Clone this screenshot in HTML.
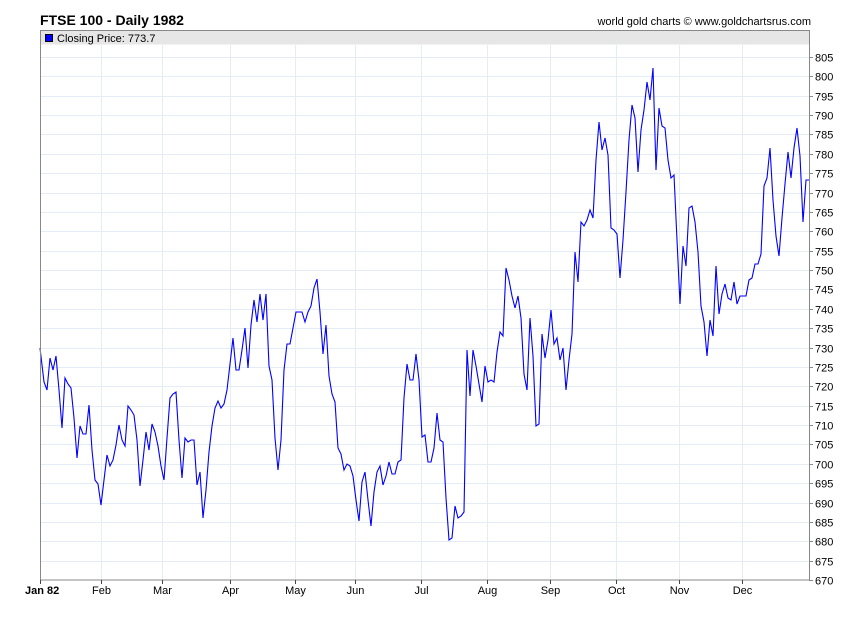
<!DOCTYPE html>
<html><head><meta charset="utf-8"><style>
body{margin:0;background:#fff;width:850px;height:616px;overflow:hidden;font-family:"Liberation Sans",sans-serif;}
</style></head><body>
<svg width="850" height="616" xmlns="http://www.w3.org/2000/svg" font-family="Liberation Sans, sans-serif">
<text x="40" y="25" font-size="14" font-weight="bold" fill="#000">FTSE 100 - Daily 1982</text>
<text x="811" y="25" font-size="11" text-anchor="end" fill="#000">world gold charts © www.goldchartsrus.com</text>
<rect x="40.5" y="45" width="769" height="535" fill="#fff"/>
<g id="grid" stroke="#e4edf6" stroke-width="1">
</g>
<rect x="40.5" y="30.5" width="769" height="14" fill="#e6e6e6"/>
<rect x="45.5" y="34.5" width="7" height="7" fill="#0000ff" stroke="#000" stroke-width="1"/>
<text x="57" y="42" font-size="11" fill="#000">Closing Price: 773.7</text>
<polyline id="line" fill="none" stroke="#0000ff" stroke-width="1.1" points="40,348 44,382 47,390 50,358 53,370 56,356 59,390 62,428 65,378 68,384 71,388 74,418 77,458 80,426 83,434 86,434 89,405 92,450 95,480 98,484 101,505 104,480 107,455 110,466 113,460 116,445 119,425 122,440 125,446 128,406 131,410 134,415 137,440 140,486 143,460 146,432 149,450 152,424 155,432 158,446 161,466 164,480 167,438 170,398 173,394 176,392 179,440 182,478 185,438 188,442 191,440 194,440 197,485 200,472 203,518 206,490 209,452 212,426 215,408 218,401 221,408 224,404 227,390 230,364 233,338 236,370 239,370 242,350 245,328 248,368 251,325 254,300 257,322 260,294 263,320 266,294 269,366 272,380 275,438 278,470 281,440 284,370 287,344 290,344 293,328 296,312 299,312 302,312 305,322 308,312 311,306 314,288 317,279 320,312 323,354 326,325 329,376 332,394 335,402 338,448 341,454 344,470 347,464 350,466 353,476 356,500 359,521 362,482 365,472 368,500 371,526 374,492 377,472 380,466 383,485 386,476 389,462 392,474 395,474 398,462 401,460 404,398 407,364 410,380 413,380 416,354 419,380 422,437 425,435 428,462 431,462 434,448 437,413 440,440 443,442 446,498 449,540 452,538 455,506 458,518 461,516 464,512 467,350 470,396 473,350 476,366 479,384 482,402 485,366 488,382 491,380 494,382 497,352 500,332 503,336 506,268 509,280 512,296 515,308 518,296 521,318 524,374 527,390 530,318 533,356 536,426 539,424 542,334 545,358 548,340 551,310 554,344 557,338 560,360 563,348 566,390 569,360 572,334 575,252 578,282 581,222 584,226 587,220 590,210 593,218 596,160 599,122 602,150 605,138 608,155 611,228 614,230 617,234 620,278 623,240 626,192 629,140 632,105 635,118 638,172 641,130 644,110 647,82 650,100 653,68 656,170 659,108 662,126 665,128 668,160 671,178 674,175 677,240 680,304 683,246 686,266 689,208 692,206 695,222 698,252 701,306 704,322 707,356 710,320 713,336 716,266 719,314 722,294 725,284 728,298 731,300 734,282 737,304 740,296 743,296 746,296 749,280 752,278 755,264 758,264 761,254 764,186 767,178 770,148 773,200 776,236 779,256 782,218 785,184 788,152 791,178 794,148 797,128 800,156 803,222 806,180 809,180"/>
<rect x="40.5" y="30.5" width="769" height="549.5" fill="none" stroke="#888" stroke-width="1"/>
<g id="axes" font-size="11" fill="#000"></g>
</svg>
<script>
var ns="http://www.w3.org/2000/svg",g=document.getElementById("grid"),a=document.getElementById("axes");
function el(p,t,at){var e=document.createElementNS(ns,t);for(var k in at)e.setAttribute(k,at[k]);p.appendChild(e);return e;}
for(var v=670;v<=805;v+=5){var y=Math.round(580-(v-670)/5*19.37)+0.5;
 if(v>670)el(g,"line",{x1:41,x2:809,y1:y,y2:y});
 el(a,"line",{x1:809,x2:813,y1:y,y2:y,stroke:"#888"});
 var t=el(a,"text",{x:815,y:y+4});t.textContent=v;}
var m=[["Jan 82",40],["Feb",101],["Mar",162],["Apr",230],["May",295],["Jun",355],["Jul",421],["Aug",487],["Sep",550],["Oct",616],["Nov",679],["Dec",742]];
m.forEach(function(o,i){var x=o[1]+0.5;if(i>0)el(g,"line",{x1:x,x2:x,y1:45,y2:580});
 el(a,"line",{x1:x,x2:x,y1:580,y2:584,stroke:"#444"});
 var t=el(a,"text",{x:i==0?25:x,y:594,"text-anchor":i==0?"start":"middle"});if(i==0)t.setAttribute("font-weight","bold");t.textContent=o[0];});
</script>
</body></html>
